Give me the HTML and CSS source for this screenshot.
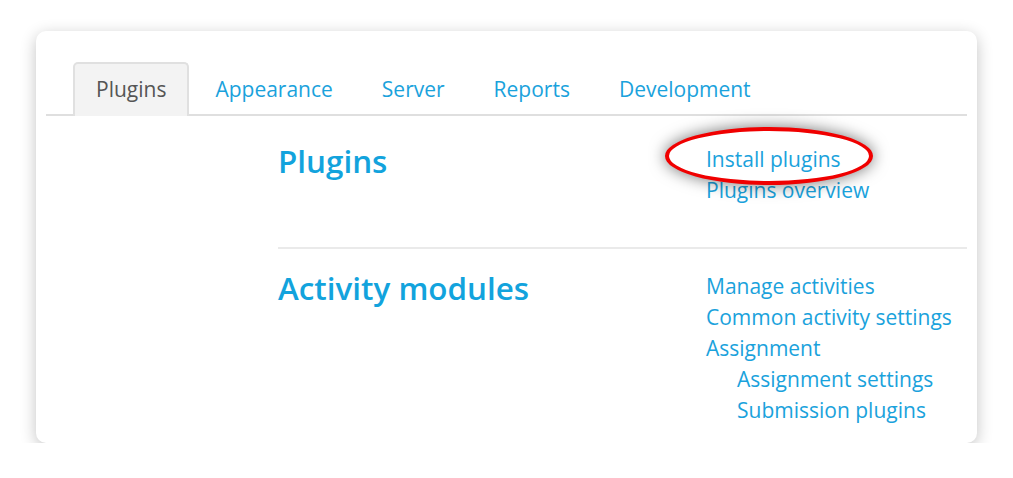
FILE: index.html
```html
<!DOCTYPE html>
<html lang="en">
<head>
<meta charset="utf-8">
<title>Site administration</title>
<link rel="stylesheet" href="styles.css">
</head>
<body>
<div class="card">
  <ul class="tabs">
    <li class="tab active">Plugins</li>
    <li class="tab">Appearance</li>
    <li class="tab">Server</li>
    <li class="tab">Reports</li>
    <li class="tab">Development</li>
  </ul>
  <div class="content">
    <section class="section first">
      <h2 class="heading">Plugins</h2>
      <ul class="links">
        <li class="link highlighted"><span class="ring"></span><span class="label">Install plugins</span></li>
        <li class="link">Plugins overview</li>
      </ul>
    </section>
    <section class="section second">
      <h2 class="heading">Activity modules</h2>
      <ul class="links">
        <li class="link">Manage activities</li>
        <li class="link">Common activity settings</li>
        <li class="link">Assignment</li>
        <li class="link sub">Assignment settings</li>
        <li class="link sub">Submission plugins</li>
      </ul>
    </section>
  </div>
</div>
</body>
</html>
```
FILE: styles.css
```css
html, body {
  margin: 0;
  padding: 0;
  background: #ffffff;
}
body {
  font-family: "Open Sans", "Noto Sans", sans-serif;
  color: #1aa2dc;
}
.card {
  box-sizing: border-box;
  margin: 31px 0 0 36px;
  width: 941px;
  height: 412px;
  border-radius: 10px;
  background: #fff;
  box-shadow: 0 4px 16px rgba(0, 0, 0, 0.24);
  padding: 31px 10px 0;
  overflow: hidden;
}
.tabs {
  list-style: none;
  margin: 0;
  padding: 0 0 0 27px;
  display: flex;
  border-bottom: 2px solid #dfdfdf;
}
.tab {
  box-sizing: border-box;
  height: 54px;
  padding: 0 21px 3px;
  margin-right: 3px;
  margin-bottom: -2px;
  display: flex;
  align-items: center;
  font-size: 21px;
  border: 2px solid transparent;
  border-bottom: 0;
  border-radius: 5px 5px 0 0;
  color: #1aa2dc;
}
.tab.active {
  background: #f3f3f3;
  border-color: #e0e0e0;
  color: #555;
}
.content {
  margin-left: 232px;
}
.section {
  display: grid;
  grid-template-columns: 428px 1fr;
}
.section.first {
  padding: 28px 0 41px;
}
.section.second {
  border-top: 2px solid #eaeaea;
  padding-top: 22px;
}
.heading {
  margin: 1px 0 0;
  font-size: 31.4px;
  font-weight: 600;
  line-height: 31px;
  color: #12a3dd;
}
.links {
  list-style: none;
  margin: 0;
  padding: 0;
}
.link {
  font-size: 21px;
  line-height: 31px;
  white-space: nowrap;
}
.link.sub {
  padding-left: 31px;
}
.highlighted {
  position: relative;
}
.ring {
  position: absolute;
  left: -41px;
  top: -17px;
  width: 208px;
  height: 58px;
  box-sizing: border-box;
  border: 4px solid #f00000;
  border-radius: 50%;
  background: #fff;
  box-shadow: 0 0 16px rgba(0, 0, 0, 0.55);
  z-index: 1;
}
.label {
  position: relative;
  z-index: 2;
}
```
